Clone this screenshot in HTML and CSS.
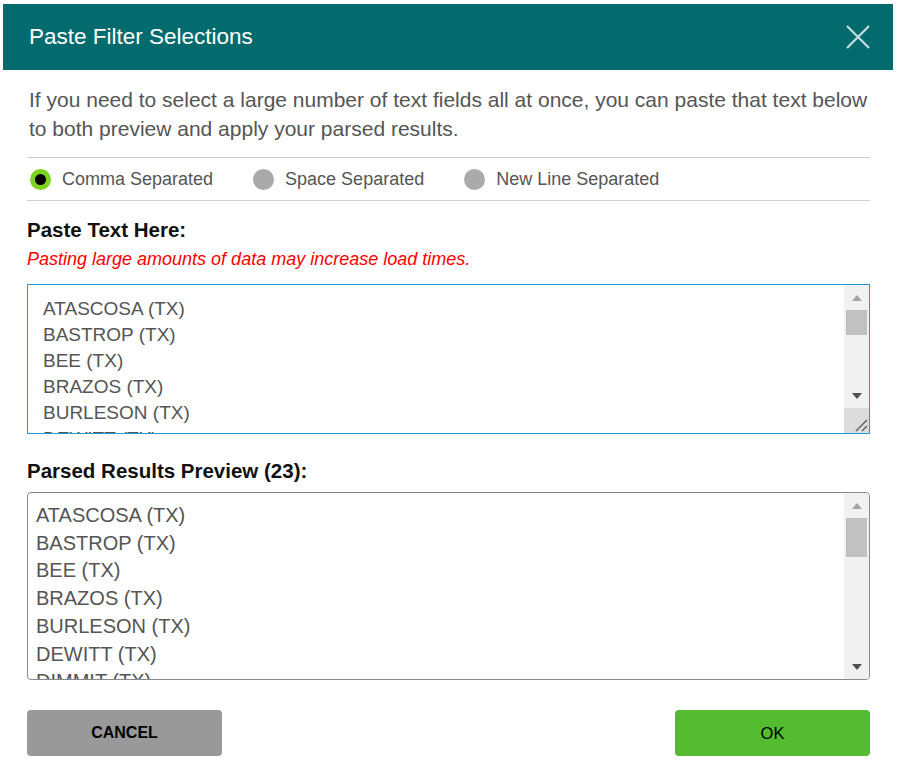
FILE: index.html
```html
<!DOCTYPE html>
<html lang="en">
<head>
<meta charset="utf-8">
<title>Paste Filter Selections</title>
<link rel="stylesheet" href="styles.css">
</head>
<body>
<div class="dialog">
  <header class="dlg-header">
    <h1 class="dlg-title">Paste Filter Selections</h1>
    <button class="close" aria-label="Close">
      <svg width="24" height="24" viewBox="0 0 24 24"><path d="M1 1 L23 23 M23 1 L1 23" stroke="#c4dfdf" stroke-width="2.2" fill="none"/></svg>
    </button>
  </header>
  <div class="dlg-body">
    <p class="intro">If you need to select a large number of text fields all at once, you can paste that text below to both preview and apply your parsed results.</p>
    <div class="radios">
      <label class="radio"><span class="dot dot-on"></span><span>Comma Separated</span></label>
      <label class="radio"><span class="dot"></span><span>Space Separated</span></label>
      <label class="radio"><span class="dot"></span><span>New Line Separated</span></label>
    </div>
    <div class="label">Paste Text Here:</div>
    <div class="warn">Pasting large amounts of data may increase load times.</div>
    <div class="box box-input">
      <div class="lines lines-input">
        <div>ATASCOSA (TX)</div><div>BASTROP (TX)</div><div>BEE (TX)</div><div>BRAZOS (TX)</div><div>BURLESON (TX)</div><div>DEWITT (TX)</div><div>DIMMIT (TX)</div><div>FAYETTE (TX)</div>
      </div>
      <div class="sb">
        <div class="sb-btn"><span class="tri-up"></span></div>
        <div class="sb-thumb thumb-input"></div>
        <div class="sb-space"></div>
        <div class="sb-btn"><span class="tri-down"></span></div>
        <div class="sb-corner">
          <svg width="25" height="25" viewBox="0 0 25 25"><path d="M12 23 L23 12 M18 23 L23 18" stroke="#555" stroke-width="1.2" fill="none"/></svg>
        </div>
      </div>
    </div>
    <div class="label label-preview">Parsed Results Preview (23):</div>
    <div class="box box-preview">
      <div class="lines lines-preview">
        <div>ATASCOSA (TX)</div><div>BASTROP (TX)</div><div>BEE (TX)</div><div>BRAZOS (TX)</div><div>BURLESON (TX)</div><div>DEWITT (TX)</div><div>DIMMIT (TX)</div><div>FAYETTE (TX)</div><div>FRIO (TX)</div><div>GONZALES (TX)</div><div>GRIMES (TX)</div><div>KARNES (TX)</div><div>LA SALLE (TX)</div><div>LAVACA (TX)</div><div>LEE (TX)</div><div>LIVE OAK (TX)</div><div>MADISON (TX)</div><div>MAVERICK (TX)</div><div>MCMULLEN (TX)</div><div>MILAM (TX)</div><div>WEBB (TX)</div><div>WILSON (TX)</div><div>ZAVALA (TX)</div>
      </div>
      <div class="sb">
        <div class="sb-btn"><span class="tri-up"></span></div>
        <div class="sb-thumb thumb-preview"></div>
        <div class="sb-space"></div>
        <div class="sb-btn"><span class="tri-down"></span></div>
      </div>
    </div>
    <div class="actions">
      <button class="btn btn-cancel">CANCEL</button>
      <button class="btn btn-ok">OK</button>
    </div>
  </div>
</div>
</body>
</html>
```
FILE: styles.css
```css
* { box-sizing: border-box; }
html, body { margin: 0; padding: 0; background: #fff; }
body { font-family: "Liberation Sans", Arial, sans-serif; }

.dialog {
  width: 890px;
  margin: 4px 0 0 3px;
  background: #fff;
}

.dlg-header {
  height: 66px;
  background: #036b6d;
  display: flex;
  align-items: center;
  justify-content: space-between;
  padding: 0 23px 0 26px;
}
.dlg-title {
  margin: 0;
  font-size: 22.5px;
  font-weight: normal;
  color: #fff;
}
.close {
  border: 0;
  background: none;
  padding: 0;
  width: 24px;
  height: 24px;
  display: block;
  cursor: pointer;
}
.close svg { display: block; }

.dlg-body {
  padding: 0 23px 0 24px;
}

.intro {
  margin: 15px 0 0 2px;
  font-size: 21px;
  line-height: 29px;
  color: #555;
}

.radios {
  margin-top: 14px;
  border-top: 1px solid #cfcfcf;
  border-bottom: 1px solid #cfcfcf;
  height: 44px;
  display: flex;
  align-items: center;
  gap: 40px;
  padding-left: 3px;
}
.radio {
  display: flex;
  align-items: center;
  gap: 11px;
  font-size: 18px;
  color: #555;
}
.dot {
  width: 21px;
  height: 21px;
  border-radius: 50%;
  background: #aaa;
  display: block;
}
.dot-on {
  background: #000;
  border: 5px solid #7ed321;
}

.label {
  margin-top: 17px;
  font-size: 20.5px;
  font-weight: bold;
  line-height: 24px;
  color: #111;
}
.warn {
  font-size: 18px;
  font-style: italic;
  color: #f00;
  line-height: 20px;
  margin-top: 7px;
}

.box {
  display: flex;
  overflow: hidden;
  background: #fff;
}
.box-input {
  margin-top: 15px;
  height: 150px;
  border: 1px solid #1c9ad6;
}
.box-preview {
  margin-top: 9px;
  height: 188px;
  border: 1px solid #8a8a8a;
  border-radius: 4px;
}

.lines {
  flex: 1;
  overflow: hidden;
  color: #555;
}
.lines-input {
  padding: 11px 0 0 15px;
  font-size: 19px;
  line-height: 26px;
}
.lines-preview {
  padding: 9px 0 0 8px;
  font-size: 20px;
  line-height: 27.7px;
}

.label-preview { margin-top: 25px; }

.sb {
  width: 25px;
  background: #f1f1f1;
  display: flex;
  flex-direction: column;
}
.sb-btn {
  height: 25px;
  display: flex;
  align-items: center;
  justify-content: center;
}
.tri-up {
  width: 0; height: 0;
  border-left: 5.5px solid transparent;
  border-right: 5.5px solid transparent;
  border-bottom: 6px solid #a3a3a3;
}
.tri-down {
  width: 0; height: 0;
  border-left: 5.5px solid transparent;
  border-right: 5.5px solid transparent;
  border-top: 6px solid #505050;
}
.sb-thumb {
  margin: 0 2px;
  background: #c1c1c1;
}
.thumb-input { height: 25px; }
.thumb-preview { height: 39px; }
.sb-space { flex: 1; }
.sb-corner {
  height: 25px;
  background: #dcdcdc;
}
.sb-corner svg { display: block; }

.actions {
  margin-top: 30px;
  display: flex;
  justify-content: space-between;
}
.btn {
  width: 195px;
  height: 46px;
  border: 0;
  border-radius: 4px;
  font-family: "Liberation Sans", Arial, sans-serif;
  font-size: 16px;
  color: #000;
  cursor: pointer;
}
.btn-cancel {
  background: #999;
  font-weight: bold;
}
.btn-ok {
  background: #55bb30;
  font-size: 16.5px;
}
```
